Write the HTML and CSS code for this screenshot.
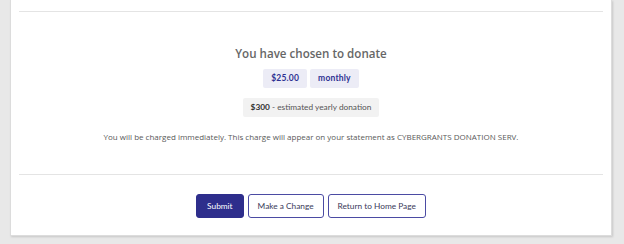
FILE: index.html
```html
<!DOCTYPE html>
<html>
<head>
<meta charset="utf-8">
<link rel="stylesheet" href="styles.css">
</head>
<body>
<div class="card">
  <hr class="rule rule-top">
  <div class="summary">
    <h2 class="title">You have chosen to donate</h2>
    <div class="badges">
      <span class="badge">$25.00</span>
      <span class="badge">monthly</span>
    </div>
    <div class="yearly"><b>$300</b> - estimated yearly donation</div>
    <p class="note">You will be charged immediately. This charge will appear on your statement as CYBERGRANTS DONATION SERV.</p>
  </div>
  <hr class="rule rule-bottom">
  <div class="actions">
    <button class="btn btn-primary">Submit</button>
    <button class="btn btn-outline">Make a Change</button>
    <button class="btn btn-outline">Return to Home Page</button>
  </div>
</div>
</body>
</html>
```

FILE: styles.css
```css
html, body {
  margin: 0;
  padding: 0;
  background: #e8e8e8;
  height: 100%;
}
body {
  font-family: "Open Sans", "Liberation Sans", sans-serif;
}
.card {
  margin: 0 10px 0 10px;
  width: 602px;
  height: 236px;
  background: #fff;
  border: 1px solid #dcdcdc;
  border-top: none;
  box-shadow: 1px 1px 2px rgba(0,0,0,0.15);
  box-sizing: border-box;
  padding: 11px 8px 0 8px;
}
.rule {
  border: none;
  height: 1px;
  margin: 0;
  background: #e4e4e4;
}
.summary {
  display: flex;
  flex-direction: column;
  align-items: center;
  padding-top: 33px;
  height: 162px;
  box-sizing: border-box;
}
.title {
  margin: 0;
  font-size: 11.6px;
  font-weight: 600;
  color: #666;
  line-height: 17px;
}
.badges {
  display: flex;
  gap: 3px;
  margin-top: 7px;
}
.badge {
  background: #ececf6;
  color: #2e3192;
  font-family: "Lato", sans-serif;
  font-weight: 700;
  font-size: 8.5px;
  letter-spacing: 0.2px;
  padding: 0 8px;
  height: 19px;
  line-height: 19px;
  border-radius: 2px;
}
.yearly {
  margin-top: 10px;
  background: #f2f2f2;
  color: #555;
  font-family: "Lato", sans-serif;
  font-size: 8.3px;
  height: 19px;
  line-height: 19px;
  padding: 0 8px;
  border-radius: 2px;
}
.yearly b {
  color: #333;
}
.note {
  margin: 14px 0 0 0;
  font-size: 8px;
  color: #595959;
  line-height: 12px;
}
.actions {
  display: flex;
  justify-content: center;
  gap: 4px;
  margin-top: 19px;
}
.btn {
  font-family: "Lato", sans-serif;
  font-size: 8.3px;
  height: 24px;
  padding: 0 9px;
  border-radius: 3px;
  box-sizing: border-box;
}
.btn-primary {
  background: #2e2e8c;
  color: #fff;
  border: 1px solid #2e2e8c;
  padding: 0 10px;
}
.btn-outline {
  background: #fff;
  color: #3a3a5a;
  border: 1px solid #4b4ba3;
}
```
